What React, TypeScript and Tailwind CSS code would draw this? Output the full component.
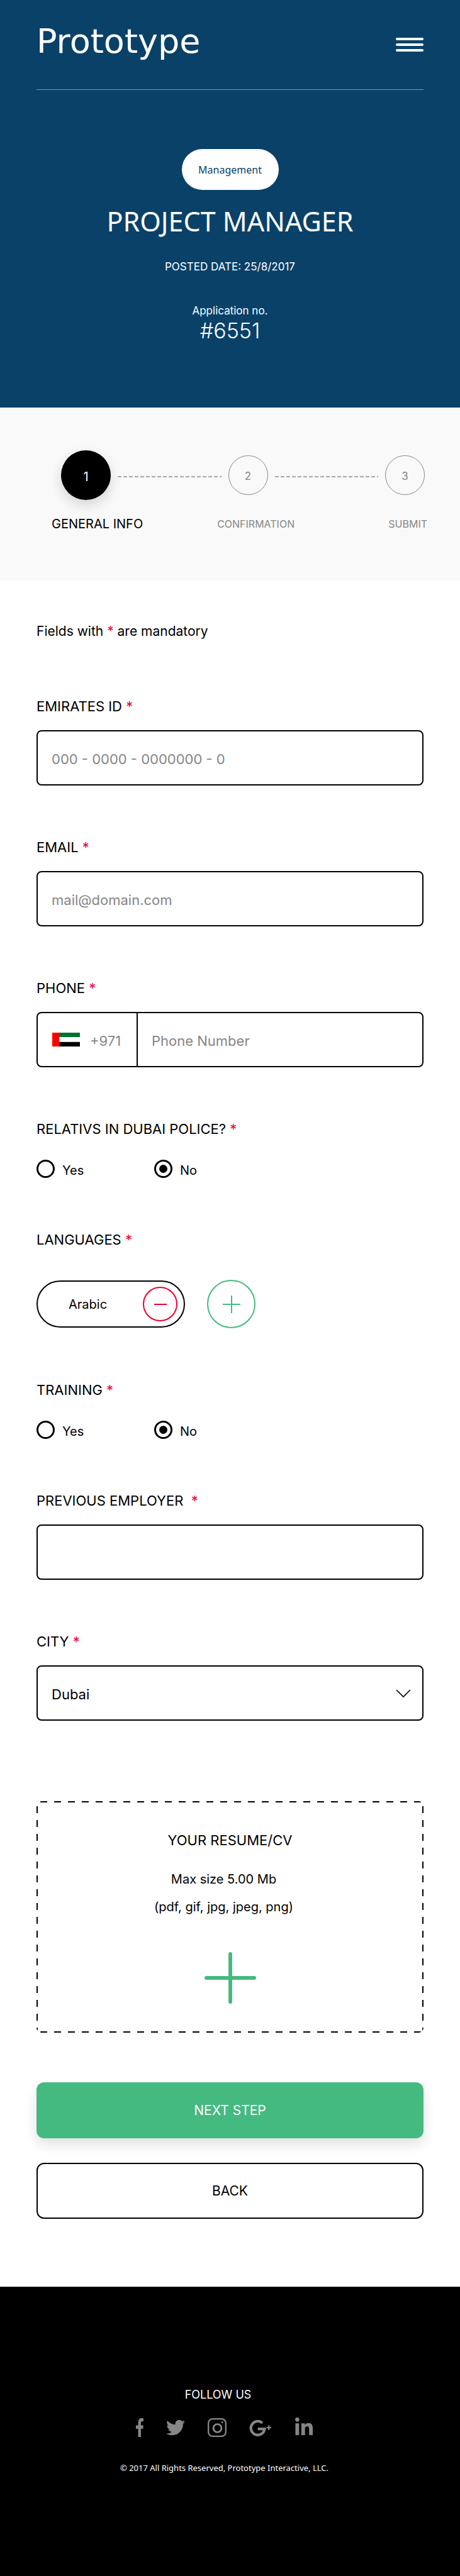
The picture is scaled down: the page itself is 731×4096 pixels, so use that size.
import type { ReactNode } from "react";
import { FaFacebookF, FaTwitter, FaLinkedinIn } from "react-icons/fa";

const labelText = "block text-[22px] leading-7";
const box =
  "block h-[88px] w-full rounded-lg border-2 border-black bg-white px-[22px] pt-1 text-[22px] text-black placeholder:text-[#868686] placeholder:opacity-100";

function Star() {
  return <span className="text-[#f00030]">*</span>;
}

function Field({ id, label, children }: { id: string; label: string; children: ReactNode }) {
  return (
    <div className="flex flex-col gap-6">
      <label htmlFor={id} className={labelText}>
        {label} <Star />
      </label>
      {children}
    </div>
  );
}

function YesNo({ name, label }: { name: string; label: string }) {
  return (
    <fieldset>
      <legend className={labelText}>
        {label} <Star />
      </legend>
      <div className="flex pt-[35px]">
        {["Yes", "No"].map((option) => (
          <label key={option} className="flex w-[187px] items-center gap-3 text-[20px] leading-6">
            <input
              type="radio"
              name={name}
              defaultChecked={option === "No"}
              className="size-[29px] appearance-none rounded-full border-3 border-black bg-clip-content p-[5px] checked:bg-black"
            />
            <span className="pt-1">{option}</span>
          </label>
        ))}
      </div>
    </fieldset>
  );
}

function Dashes() {
  return (
    <span className="mt-1 h-[2px] flex-1 bg-[repeating-linear-gradient(90deg,#a9a9a9_0_6px,transparent_6px_9px)]" />
  );
}

export default function App() {
  return (
    <div className="bg-white font-['Inter',sans-serif] text-black">
      <header className="flex flex-col items-center bg-[#0a4168] px-[58px] pb-[102px] text-white">
        <div className="flex h-[143px] w-full items-start justify-between border-b border-[#8297ad] pt-[34px]">
          <a href="#home" className="font-['DejaVu_Sans',sans-serif] text-[54px] leading-[64px]">
            Prototype
          </a>
          <button type="button" aria-label="Menu" className="mt-[26px] flex w-11 flex-col gap-[5px]">
            <span className="h-1 w-full rounded-full bg-white" />
            <span className="h-1 w-full rounded-full bg-white" />
            <span className="h-1 w-full rounded-full bg-white" />
          </button>
        </div>
        <span className="mt-[94px] flex h-[65px] w-[154px] items-center justify-center rounded-full bg-white font-['Noto_Sans',sans-serif] text-base text-[#0a4168]">
          Management
        </span>
        <h1 className="mt-[22px] font-['Noto_Sans',sans-serif] text-[43px] leading-[56px]">PROJECT MANAGER</h1>
        <p className="mt-[32px] text-[17px] leading-6">POSTED DATE: 25/8/2017</p>
        <p className="mt-[46px] text-[17px] leading-6">Application no.</p>
        <p className="text-[34px] leading-10 font-light">#6551</p>
      </header>

      <section className="bg-[#f9f9f9] pt-[68px] pb-[76px]">
        <div className="flex items-center gap-[11px] pr-14 pl-[97px]">
          <span className="flex size-[79px] items-center justify-center rounded-full bg-black pt-1 text-[20px] text-white shadow-[0_8px_20px_rgba(0,0,0,0.15)]">
            1
          </span>
          <Dashes />
          <span className="flex size-[63px] items-center justify-center rounded-full border border-[#868686] pt-1 text-[17px] text-[#868686]">
            2
          </span>
          <Dashes />
          <span className="flex size-[63px] items-center justify-center rounded-full border border-[#868686] pt-1 text-[17px] text-[#868686]">
            3
          </span>
        </div>
        <div className="grid grid-cols-[264fr_273fr_60fr] items-center pt-[24px] pr-[52px] pl-[82px] text-base leading-7 text-[#868686]">
          <span className="text-[20px] text-black">GENERAL INFO</span>
          <span>CONFIRMATION</span>
          <span>SUBMIT</span>
        </div>
      </section>

      <form className="flex flex-col px-[58px] pt-[67px] pb-[108px]">
        <p className="text-[21px] leading-7">
          Fields with <Star /> are mandatory
        </p>

        <div className="mt-[91px] flex flex-col gap-[84px]">
          <Field id="emirates" label="EMIRATES ID">
            <input id="emirates" className={box} placeholder="000 - 0000 - 0000000 - 0" />
          </Field>
          <Field id="email" label="EMAIL">
            <input id="email" type="email" className={box} placeholder="mail@domain.com" />
          </Field>
          <Field id="phone" label="PHONE">
            <div className="flex h-[88px] rounded-lg border-2 border-black text-[22px]">
              <div className="flex w-[159px] items-center gap-4 border-r-2 border-black pl-[23px]">
                <svg viewBox="0 0 44 22" className="h-[22px] w-11" aria-label="United Arab Emirates">
                  <path d="M11 0H44V7H11Z" fill="#00732f" />
                  <path d="M11 14H44V15H11Z" fill="#c8c8c8" />
                  <path d="M11 15H44V22H11Z" fill="#000" />
                  <path d="M0 0H11V22H0Z" fill="#ff0000" />
                </svg>
                <span className="pt-1 text-[#868686]">+971</span>
              </div>
              <input
                id="phone"
                type="tel"
                placeholder="Phone Number"
                className="min-w-0 flex-1 px-[22px] pt-1 placeholder:text-[#868686] placeholder:opacity-100"
              />
            </div>
          </Field>
          <YesNo name="relatives" label="RELATIVS IN DUBAI POLICE?" />
          <div className="flex flex-col gap-[50px]">
            <span className={labelText}>
              LANGUAGES <Star />
            </span>
            <div className="flex items-center gap-[35px]">
              <div className="flex h-[75px] w-[236px] items-center justify-between rounded-full border-2 border-black pr-[10px] pl-[49px]">
                <span className="text-[20px]">Arabic</span>
                <button
                  type="button"
                  aria-label="Remove Arabic"
                  className="flex size-[55px] items-center justify-center rounded-full border-2 border-[#f00030]"
                >
                  <svg viewBox="0 0 20 20" className="size-5" fill="none" stroke="#f00030" strokeWidth="2">
                    <path d="M0 10H20" />
                  </svg>
                </button>
              </div>
              <button
                type="button"
                aria-label="Add language"
                className="flex size-[77px] items-center justify-center rounded-full border-2 border-[#45ba80]"
              >
                <svg viewBox="0 0 28 28" className="size-7" fill="none" stroke="#45ba80" strokeWidth="2">
                  <path d="M0 14H28M14 0V28" />
                </svg>
              </button>
            </div>
          </div>
          <YesNo name="training" label="TRAINING" />
          <Field id="employer" label={"PREVIOUS EMPLOYER\u00a0"}>
            <input id="employer" className={box} />
          </Field>
          <Field id="city" label="CITY">
            <div className="relative">
              <select id="city" className={`${box} appearance-none`}>
                <option>Dubai</option>
              </select>
              <svg
                viewBox="0 0 24 14"
                className="pointer-events-none absolute top-[38px] right-5 h-[14px] w-6"
                fill="none"
                stroke="#000"
                strokeWidth="1.6"
              >
                <path d="M1 1L12 12L23 1" />
              </svg>
            </div>
          </Field>
        </div>

        <label className="mt-[128px] flex flex-col items-center rounded-lg pt-[48px] pb-[46px] [background-image:repeating-linear-gradient(90deg,transparent_0_6px,#000_6px_17px,transparent_17px_22px),repeating-linear-gradient(90deg,transparent_0_6px,#000_6px_17px,transparent_17px_22px),repeating-linear-gradient(180deg,transparent_0_8px,#000_8px_19px,transparent_19px_22px),repeating-linear-gradient(180deg,transparent_0_8px,#000_8px_19px,transparent_19px_22px)] [background-position:top,bottom,left,right] [background-repeat:no-repeat] [background-size:100%_2px,100%_2px,2px_100%,2px_100%]">
          <input type="file" className="sr-only" />
          <span className="text-[22px] leading-7">YOUR RESUME/CV</span>
          <span className="mt-[26px] pr-5 text-center text-[20px] leading-[44px]">
            Max size 5.00 Mb
            <br />
            (pdf, gif, jpg, jpeg, png)
          </span>
          <svg
            viewBox="0 0 82 82"
            className="mt-[50px] size-[82px]"
            fill="none"
            stroke="#45ba80"
            strokeWidth="6"
            strokeLinecap="round"
          >
            <path d="M3 41H79M41 3V79" />
          </svg>
        </label>

        <button
          type="submit"
          className="mt-[79px] h-[89px] rounded-xl bg-[#45ba80] text-[21px] text-white shadow-[0_10px_20px_rgba(0,0,0,0.12)]"
        >
          NEXT STEP
        </button>
        <button type="button" className="mt-[39px] h-[89px] rounded-xl border-2 border-black text-[21px]">
          BACK
        </button>
      </form>

      <footer className="flex flex-col items-center bg-black pt-[160px] pb-[162px] text-white">
        <p className="pr-[38px] text-lg leading-6">FOLLOW US</p>
        <nav className="mt-[24px] mr-[18px] flex h-8 w-[284px] items-center justify-between text-[#868686]">
          <a href="#facebook" aria-label="Facebook">
            <FaFacebookF className="h-[30px] w-[14px]" preserveAspectRatio="none" />
          </a>
          <a href="#twitter" aria-label="Twitter">
            <FaTwitter className="size-[30px]" />
          </a>
          <a href="#instagram" aria-label="Instagram">
            <svg viewBox="0 0 31 31" className="size-[30px]" fill="none" stroke="currentColor" strokeWidth="2.4">
              <rect x="1.2" y="1.2" width="28.6" height="28.6" rx="7" />
              <circle cx="16" cy="16.5" r="6.6" strokeWidth="3" />
              <circle cx="24" cy="7" r="1.5" fill="currentColor" stroke="none" />
            </svg>
          </a>
          <a href="#google-plus" aria-label="Google Plus">
            <svg viewBox="0 0 36 28" className="h-[27px] w-[35px]" fill="none" stroke="currentColor" strokeWidth="4.4">
              <path d="M21.5 6A11.3 11.3 0 1 0 25.2 15.6H14" />
              <path d="M28.5 13.6H36M32.2 9.8V17.4" strokeWidth="2.4" />
            </svg>
          </a>
          <a href="#linkedin" aria-label="LinkedIn">
            <FaLinkedinIn className="size-[32px]" />
          </a>
        </nav>
        <p className="mt-[38px] pr-[18px] font-['Noto_Sans',sans-serif] text-[13px] leading-5">
          © 2017 All Rights Reserved, Prototype Interactive, LLC.
        </p>
      </footer>
    </div>
  );
}
